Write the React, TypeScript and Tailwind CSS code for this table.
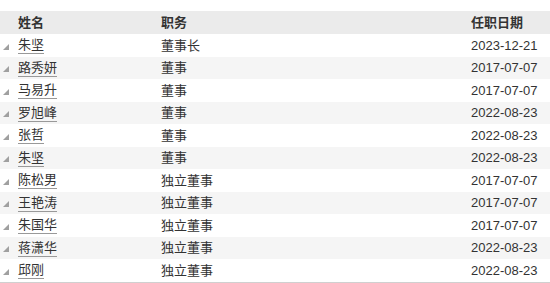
import React from "react";

const rows: [string, string, string][] = [
  ["朱坚", "董事长", "2023-12-21"],
  ["路秀妍", "董事", "2017-07-07"],
  ["马易升", "董事", "2017-07-07"],
  ["罗旭峰", "董事", "2022-08-23"],
  ["张哲", "董事", "2022-08-23"],
  ["朱坚", "董事", "2022-08-23"],
  ["陈松男", "独立董事", "2017-07-07"],
  ["王艳涛", "独立董事", "2017-07-07"],
  ["朱国华", "独立董事", "2017-07-07"],
  ["蒋潇华", "独立董事", "2022-08-23"],
  ["邱刚", "独立董事", "2022-08-23"],
];

function Tri() {
  return (
    <svg width="6" height="6" viewBox="0 0 6 6" className="shrink-0">
      <polygon points="6,0 6,6 0,6" fill="#a0a0a0" />
    </svg>
  );
}

export default function App() {
  return (
    <div className="w-[550px] h-[283px] bg-white text-[13px] text-[#333] pt-[11px] font-['Liberation_Sans','Arimo','Arial','Noto_Sans_CJK_SC',sans-serif]">
      <div className="flex items-center h-[23px] bg-[#ebebeb] font-bold">
        <div className="w-[161px] pl-[18px]">姓名</div>
        <div className="w-[310px]">职务</div>
        <div>任职日期</div>
      </div>
      {rows.map((r, i) => (
        <div
          key={i}
          className={
            "flex items-center " +
            (i % 2 === 0 ? "h-[23px] bg-white" : "h-[22px] bg-[#f5f5f5]")
          }
        >
          <div className="w-[161px] flex items-center">
            <div className="w-[18px] pl-[3px] pt-[2px] flex">
              <Tri />
            </div>
            <span className="border-b border-[#999] leading-[16px]">{r[0]}</span>
          </div>
          <div className="w-[310px]">{r[1]}</div>
          <div className="font-['Liberation_Sans',Arial,sans-serif]">{r[2]}</div>
        </div>
      ))}
      <div className="h-px bg-[#d0d0d0]" />
    </div>
  );
}
